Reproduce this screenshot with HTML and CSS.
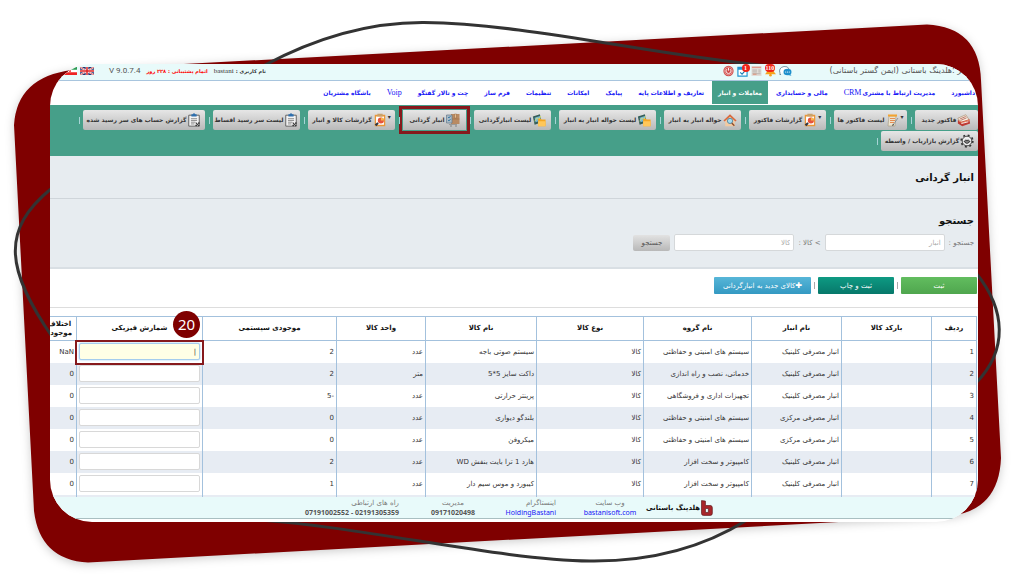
FILE: index.html
```html
<!DOCTYPE html>
<html lang="fa" dir="rtl">
<head>
<meta charset="utf-8">
<meta name="viewport" content="width=device-width, initial-scale=1">
<title>انبار گردانی</title>
<link rel="stylesheet" href="styles.css">
</head>
<body>
<svg class="defs" aria-hidden="true">
  <symbol id="i-clip" viewBox="0 0 14 16"><path d="M1 2.500h12v12.500H1z" fill="#f3f3f3" stroke="#555" stroke-width="1"/><path d="M4 1.500h1.500q1.500-2.500 3 0H10V4H4z" fill="#2d6fae"/><path d="M3.500 6.500h7M3.500 8.500h7M3.500 10.500h5M3.500 12.500h4" stroke="#666" stroke-width=".8"/><path d="m9 11 4 4" stroke="#333" stroke-width="1.200"/><circle cx="9.500" cy="14" r="1" fill="#333"/><circle cx="12.500" cy="11.500" r="1" fill="#333"/></symbol>
  <symbol id="i-report" viewBox="0 0 14 16"><path d="M1 2h12v13H1z" fill="#e9973a"/><path d="M2.500 4h9v9.500h-9z" fill="#fff"/><path d="M4 .8h6V4H4z" fill="#c9a16a"/><circle cx="8" cy="8.500" r="3.500" fill="#e5533c"/><path d="M8 8.500V5a3.500 3.500 0 0 1 3.500 3.500z" fill="#f7b64a"/><path d="m1 13 3-2.500L5.500 12 3 15z" fill="#2e3440"/></symbol>
  <symbol id="i-stock" viewBox="0 0 16 15"><path d="M1 3.500 9 1l2 9-8 3z" fill="#355f58"/><path d="m3 5 6-2 1 5-6 2z" fill="#79b7d6"/><path d="m3 9 3-4 2 2 2-4" stroke="#d8e26b" fill="none"/><path d="M7 6h3l1 1h4.500v7.500H7z" fill="#f5a623"/><path d="M7 9h8.500v5.500H7z" fill="#ffc75a"/></symbol>
  <symbol id="i-home" viewBox="0 0 16 15"><path d="M2.500 7v7.500h11V7L8 2z" fill="#f2c9a1"/><path d="M.5 8 8 1l7.500 7-1.300 1.200L8 3.500 1.800 9.200z" fill="#d9673b"/><circle cx="8" cy="8.500" r="3" fill="#a5dcef" stroke="#50829b"/><path d="m10 11 3 3" stroke="#8a4a2a" stroke-width="1.500"/></symbol>
  <symbol id="i-box" viewBox="0 0 14 14"><path d="M5 1h8.500v10H5z" fill="#b98a62"/><path d="M8.500 1h2v4h-2zM5 6h8.500" fill="#e2bd91" stroke="#956742" stroke-width=".5"/><path d="M.5 2H6v8H.5z" fill="#a8bac6" stroke="#64798a" stroke-width=".7"/><path d="m2 4 1 1 1.500-2M2 7l1 1 1.500-2" stroke="#286fa0" fill="none" stroke-width=".8"/><path d="M3 11h8v1H3z" fill="#999"/><circle cx="5" cy="13" r=".7" fill="#666"/><circle cx="10" cy="13" r=".7" fill="#666"/></symbol>
  <symbol id="i-new" viewBox="0 0 16 14"><path d="m1 5 9-4 4 6-9 5z" fill="#f6eee0" stroke="#987350" stroke-width=".6"/><path d="m3 6 7-3M4 7.500l7-3" stroke="#a54538" stroke-width=".8"/><path d="m1 7 4 2 9-3 1 5-9 3-5-3z" fill="#be3a34"/><path d="m2 8 4 2 8-3" stroke="#ef9b6c" fill="none"/><path d="m5 11 8-2" stroke="#fff"/></symbol>
  <symbol id="i-list" viewBox="0 0 12 14"><path d="M2 3h7l-1 10H1z" fill="#ece3ce" stroke="#a4977d" stroke-width=".6"/><path d="M1 1.500h9v2H1z" fill="#f3a32e"/><path d="M3 5.500h5M3 7.500h5M3 9.500h4" stroke="#e57733" stroke-width=".8"/><path d="m6 12 5-7" stroke="#7b8791" stroke-width=".8"/><path d="m5 13 1-2 1 1z" fill="#222"/></symbol>
  <symbol id="i-gear" viewBox="0 0 16 16"><circle cx="8" cy="8" r="6.600" fill="none" stroke="#333" stroke-width="2" stroke-dasharray="2.200 2.984"/><circle cx="8" cy="8" r="5.500" fill="#eee" stroke="#333"/><path d="M4 8.500 6.500 6.200l1.500.6 1.500-.6L12 8.500 9 11H7z" fill="#444"/><path d="m6 8 2 1.500L10 8" stroke="#eee" fill="none" stroke-width=".7"/></symbol>
  <symbol id="i-power" viewBox="0 0 12 12"><circle cx="6" cy="6" r="5.600" fill="#cf4c4b"/><circle cx="6" cy="6" r="4.300" fill="none" stroke="#f2b8b5" stroke-width=".7"/><path d="M4.200 4a2.700 2.700 0 1 0 3.600 0M6 2.600v3" stroke="#fff" fill="none"/></symbol>
  <symbol id="i-task" viewBox="0 0 12 12"><path d="M1 2h10v9.500H1z" fill="#fff" stroke="#2396d0" stroke-width="1.300"/><path d="M1 2h10v2.500H1z" fill="#2396d0"/><path d="m3.500 7.500 2 2 3.500-4" stroke="#177eb4" fill="none" stroke-width="1.200"/></symbol>
  <symbol id="i-news" viewBox="0 0 12 12"><path d="M.5.500h11v11H.5z" fill="#e2dcd7"/><path d="M1 2h10" stroke="#e29a8c" stroke-width="1.500"/><path d="M1.500 5h5M1.500 7h5M1.500 9h9M8 5h2.500M8 7h2.500" stroke="#aaa29c" stroke-width=".8"/><path d="M2 9.500h4" stroke="#dc8a6e"/></symbol>
  <symbol id="i-bell" viewBox="0 0 12 12"><path d="M0 9.500Q2.500 8 2.500 5q0-3.500 3.500-3.500T9.500 5q0 3 2.500 4.500z" fill="#f6a21c"/><circle cx="6" cy="10.500" r="1.400" fill="#f6a21c"/></symbol>
  <symbol id="i-chat" viewBox="0 0 13 10"><path d="M2 8 1 9V7Q0 5 1 3t4-2.500Q9 0 10 3" fill="#fff" stroke="#5e7d90" stroke-width=".8"/><ellipse cx="8.500" cy="6" rx="4" ry="3.200" fill="#2090cc"/><path d="m11 8 1.500 1.800L9 9z" fill="#2090cc"/><circle cx="6.700" cy="6" r=".6" fill="#fff"/><circle cx="8.500" cy="6" r=".6" fill="#fff"/><circle cx="10.300" cy="6" r=".6" fill="#fff"/></symbol>
</svg>

<div class="stage">
  <svg class="backdrop" viewBox="0 0 1024 576" preserveAspectRatio="none" aria-hidden="true">
    <path class="blob" d="M72 70 927 24.500Q979 27 981 80L1001 458Q999 510 950 516L88 562.500Q40 560 34 511L14 125Q17 77 72 70Z"/>
    <g class="swoosh">
      <path d="M263 66Q345 22 424 22.500C530 24 650 55 770 66"/>
      <path d="M260 520C370 528 500 560 590 561Q680 562 747 520"/>
      <path d="M52 188C0 230 6 270 53 338"/>
      <path d="M976 273C1006 310 1008 350 976 383"/>
    </g>
  </svg>

  <main class="panel">
    <header class="topbar">
      <span class="company">کاربر :هلدینگ باستانی (ایمن گستر باستانی)</span>
      <div class="tray">
        <button class="tray-btn" aria-label="گفتگو"><svg><use href="#i-chat"/></svg></button>
        <button class="tray-btn" aria-label="اعلان ها"><svg><use href="#i-bell"/></svg><b class="count">110</b></button>
        <button class="tray-btn" aria-label="اخبار"><svg><use href="#i-news"/></svg></button>
        <button class="tray-btn" aria-label="وظایف"><svg><use href="#i-task"/></svg><b class="count count-end">1</b></button>
        <button class="tray-btn" aria-label="خروج"><svg><use href="#i-power"/></svg></button>
      </div>
      <div class="account">
        <span class="user"><b>نام کاربری :</b> <span class="latin">bastani</span></span>
        <b class="expiry">اتمام پشتیبانی : ۲۲۸ روز</b>
        <span class="version" dir="ltr">V 9.0.7.4</span>
        <span class="flags">
          <svg class="flag" viewBox="0 0 14 8"><path d="M0 0h14v8H0z" fill="#26356e"/><path d="m0 0 14 8M14 0 0 8" stroke="#fff" stroke-width="1.600"/><path d="m0 0 14 8M14 0 0 8" stroke="#d22" stroke-width=".7"/><path d="M7 0v8M0 4h14" stroke="#fff" stroke-width="2.600"/><path d="M7 0v8M0 4h14" stroke="#d22" stroke-width="1.500"/></svg>
          <svg class="flag" viewBox="0 0 14 8"><path d="M0 0h14v8H0z" fill="#fff"/><path d="M0 0h14v2.700H0z" fill="#2b9b52"/><path d="M0 5.300h14V8H0z" fill="#e22"/><circle cx="7" cy="4" r="1" fill="#e22"/></svg>
        </span>
      </div>
    </header>

    <nav class="menu">
      <a href="#">داشبورد</a><a href="#">مدیریت ارتباط با مشتری <span class="latin">CRM</span></a><a href="#">مالی و حسابداری</a><a href="#" class="active">معاملات و انبار</a><a href="#">تعاریف و اطلاعات پایه</a><a href="#">پیامک</a><a href="#">امکانات</a><a href="#">تنظیمات</a><a href="#">فرم ساز</a><a href="#">چت و تالار گفتگو</a><a href="#"><span class="latin">Voip</span></a><a href="#">باشگاه مشتریان</a>
    </nav>

    <div class="toolbar">
      <span class="tool w-xs"><button><svg><use href="#i-new"/></svg>فاکتور جدید</button></span>
      <span class="tool w-s"><button><i>▾</i><svg><use href="#i-list"/></svg>لیست فاکتور ها</button></span>
      <span class="tool w-m"><button><i>▾</i><svg><use href="#i-report"/></svg>گزارشات فاکتور</button></span>
      <span class="tool w-m"><button><svg><use href="#i-home"/></svg>حواله انبار به انبار</button></span>
      <span class="tool w-xl"><button><svg><use href="#i-stock"/></svg>لیست حواله انبار به انبار</button></span>
      <span class="tool w-m"><button><svg><use href="#i-stock"/></svg>لیست انبارگردانی</button></span>
      <span class="tool w-xs current"><button><svg><use href="#i-box"/></svg>انبار گردانی</button></span>
      <span class="tool w-l"><button><i>▾</i><svg><use href="#i-report"/></svg>گزارشات کالا و انبار</button></span>
      <span class="tool w-l"><button><svg><use href="#i-clip"/></svg>لیست سر رسید اقساط</button></span>
      <span class="tool w-xxl"><button><svg><use href="#i-clip"/></svg>گزارش حساب های سر رسید شده</button></span>
      <span class="tool w-xl"><button><svg><use href="#i-gear"/></svg>گزارش بازاریاب / واسطه</button></span>
    </div>

    <section class="title"><h1>انبار گردانی</h1></section>

    <section class="search">
      <h2>جستجو</h2>
      <form class="search-form">
        <label for="store">جستجو :</label><input id="store" placeholder="انبار">
        <label for="item">&gt; کالا :</label><input id="item" placeholder="کالا">
        <button type="button">جستجو</button>
      </form>
    </section>

    <section class="actions">
      <button class="act green">ثبت</button><span class="bar"></span>
      <button class="act teal">ثبت و چاپ</button><span class="bar"></span>
      <button class="act blue"><b>✚</b>کالای جدید به انبارگردانی</button>
    </section>

    <section class="grid-wrap">
      <table>
        <colgroup><col class="c-row"><col class="c-code"><col class="c-store"><col class="c-group"><col class="c-type"><col class="c-name"><col class="c-unit"><col class="c-sys"><col class="c-count"><col class="c-diff"></colgroup>
        <thead><tr><th>ردیف</th><th>بارکد کالا</th><th>نام انبار</th><th>نام گروه</th><th>نوع کالا</th><th>نام کالا</th><th>واحد کالا</th><th>موجودی سیستمی</th><th class="count-head">شمارش فیزیکی<span class="step">20</span></th><th>اختلاف موجودی</th></tr></thead>
        <tbody>
          <tr><td>1</td><td></td><td>انبار مصرفی کلینیک</td><td>سیستم های امنیتی و حفاظتی</td><td>کالا</td><td>سیستم صوتی باجه</td><td>عدد</td><td>2</td><td class="marked"><input class="editing" aria-label="شمارش فیزیکی 1" value="|"></td><td>NaN</td></tr>
          <tr><td>2</td><td></td><td>انبار مصرفی کلینیک</td><td>خدماتی، نصب و راه اندازی</td><td>کالا</td><td>داکت سایز 5*5</td><td>متر</td><td>2</td><td><input aria-label="شمارش فیزیکی 2"></td><td>0</td></tr>
          <tr><td>3</td><td></td><td>انبار مصرفی کلینیک</td><td>تجهیزات اداری و فروشگاهی</td><td>کالا</td><td>پرینتر حرارتی</td><td>عدد</td><td>-5</td><td><input aria-label="شمارش فیزیکی 3"></td><td>0</td></tr>
          <tr><td>4</td><td></td><td>انبار مصرفی مرکزی</td><td>سیستم های امنیتی و حفاظتی</td><td>کالا</td><td>بلندگو دیواری</td><td>عدد</td><td>0</td><td><input aria-label="شمارش فیزیکی 4"></td><td>0</td></tr>
          <tr><td>5</td><td></td><td>انبار مصرفی مرکزی</td><td>سیستم های امنیتی و حفاظتی</td><td>کالا</td><td>میکروفن</td><td>عدد</td><td>0</td><td><input aria-label="شمارش فیزیکی 5"></td><td>0</td></tr>
          <tr><td>6</td><td></td><td>انبار مصرفی کلینیک</td><td>کامپیوتر و سخت افزار</td><td>کالا</td><td>هارد 1 ترا بایت بنفش WD</td><td>عدد</td><td>2</td><td><input aria-label="شمارش فیزیکی 6"></td><td>0</td></tr>
          <tr><td>7</td><td></td><td>انبار مصرفی کلینیک</td><td>کامپیوتر و سخت افزار</td><td>کالا</td><td>کیبورد و موس سیم دار</td><td>عدد</td><td>1</td><td><input aria-label="شمارش فیزیکی 7"></td><td>0</td></tr>
          <tr><td></td><td></td><td></td><td></td><td></td><td></td><td></td><td></td><td><input aria-label="شمارش فیزیکی 8"></td><td></td></tr>
        </tbody>
      </table>
    </section>

    <footer class="foot">
      <div class="brand"><svg viewBox="0 0 12 16"><path d="M.5.500 4.500 1v4.500h5.500q1.500.500 1.500 2v6q0 2-2 2H2.500q-2 0-2-2z" fill="#a8262a" stroke="#5e1a1c" stroke-width=".7"/><path d="M4.500 8.500h3v4h-3z" fill="#e8fafa" stroke="#5e1a1c" stroke-width=".7"/></svg><b>هلدینگ باستانی</b></div>
      <div class="info"><span>وب سایت</span><a href="#">bastanisoft.com</a></div>
      <div class="info start"><span>اینستاگرام</span><a href="#">HoldingBastani</a></div>
      <div class="info"><span>مدیریت</span><strong>09171020498</strong></div>
      <div class="info start"><span>راه های ارتباطی</span><strong dir="ltr">07191002552 - 02191305359</strong></div>
    </footer>
  </main>
</div>
</body>
</html>
```
FILE: styles.css
```css
* { box-sizing: border-box; }
body {
  margin: 0;
  background: #fff;
  color: #333;
  font: 7px/10px "DejaVu Sans", sans-serif;
}
button, input { font: inherit; color: inherit; margin: 0; }
button { cursor: pointer; }
a { color: #1414f5; text-decoration: none; }
.defs { position: absolute; width: 0; height: 0; }
.latin { font-family: "Liberation Serif", serif; font-size: 8px; }

.stage {
  position: relative;
  display: flex;
  height: 100vh;
  min-height: 400px;
  padding: 64px 46px 54px 50px;
}
.backdrop { position: absolute; inset: 0; width: 100%; height: 100%; }
.blob { fill: #7f0000; filter: drop-shadow(0 2px 5px rgba(0, 0, 0, .2)); }
.swoosh { fill: none; stroke: #333; stroke-width: 3; }

.panel {
  position: relative;
  flex: 1;
  min-width: 0;
  display: flex;
  flex-direction: column;
  overflow: hidden;
  border-radius: 42px;
  background: #fff;
  padding-bottom: 3px;
}

.topbar {
  display: flex;
  align-items: center;
  height: 17px;
  padding: 0 4px 2px 13px;
  background: #e8fafa;
  border-bottom: 1px solid #a8c5de;
}
.company { color: #555; font-size: 8px; }
.tray { display: flex; align-items: center; gap: 3px; margin-right: 38px; }
.tray-btn { position: relative; width: 11px; height: 12px; padding: 0; border: 0; background: none; }
.tray-btn:first-child { width: 13px; }
.tray-btn svg { display: block; width: 100%; height: 12px; }
.count {
  position: absolute; top: -1px; left: 0;
  min-width: 8px; padding: 0 1px;
  border-radius: 4px;
  background: #f02418; color: #fff;
  font: bold 6px/8px "Liberation Serif", serif;
}
.count-end { left: 5px; }
.account { display: flex; align-items: center; gap: 6px; margin-right: auto; }
.user b, .expiry { font-size: 5px; }
.user .latin { font-size: 7px; }
.expiry { color: #f00; }
.version { font: 8px/10px Roboto, sans-serif; color: #555; }
.flags { display: flex; gap: 3px; margin-right: 9px; }
.flag { width: 14px; height: 8px; }

.menu { display: flex; height: 24px; font-size: 6px; font-weight: bold; white-space: nowrap; }
.menu .latin { font-weight: normal; }
.menu a { display: flex; align-items: center; gap: 1px; padding: 0 8px; }
.menu a:first-child { padding-right: 3px; }
.menu .active { height: 23px; padding: 0 6px; background: #469f89; color: #fff; }

.toolbar {
  display: flex;
  flex-wrap: wrap;
  align-content: flex-start;
  column-gap: 4px;
  row-gap: 1px;
  min-height: 51px;
  padding: 5px 0 4px;
  background: #469f89;
}
.tool { display: flex; align-items: center; gap: 3px; }
.tool::after { content: ""; width: 1px; height: 7px; background: #a7d4d6; }
.tool button {
  display: flex;
  flex: 1;
  align-items: center;
  justify-content: center;
  gap: 1px;
  height: 20px;
  padding: 0;
  border: 0;
  border-radius: 2px;
  background: linear-gradient(#e6e6e6, #b9b9b9);
  color: #333;
  font-size: 6px;
  font-weight: bold;
  white-space: nowrap;
}
.tool svg { width: 14px; height: 14px; flex: none; }
.tool i { font: 6px/10px "DejaVu Sans", sans-serif; align-self: flex-start; margin-top: 2px; }
.w-xs { width: 67px; }
.w-s { width: 77px; }
.w-m { width: 81px; }
.w-l { width: 91px; }
.w-xl { width: 101px; }
.w-xxl { width: 126px; }
.current button { outline: 3px solid #86191c; outline-offset: 1px; border-radius: 0; }

.title { height: 43px; padding: 15px 4px 0; background: #e7ecf0; border-bottom: 1px solid #cfd5da; }
h1, h2 { margin: 0; color: #111; font-size: 10px; line-height: 14px; }
.search { height: 70px; padding: 15px 4px 0; background: #e7ecf0; border-bottom: 2px solid #d9dfe4; color: #777; }
.search-form { display: flex; align-items: center; gap: 4px; margin-top: 6px; }
.search-form input { width: 120px; height: 17px; padding: 0 3px; border: 1px solid #d5d8da; border-radius: 2px; background: #fff; }
::placeholder { color: #aaa; opacity: 1; }
.search-form button { width: 37px; height: 16px; padding: 0; border: 0; border-radius: 2px; background: linear-gradient(#e2e2e2, #b8b8b8); color: #555; }

.actions { display: flex; align-items: flex-start; gap: 3px; height: 39px; padding: 8px 1px 0; border-bottom: 1px solid #ddd; }
.act { height: 17px; width: 76px; padding: 0; border: 0; border-radius: 1px; color: #fff; }
.act b { font-size: 8px; }
.green { background: linear-gradient(#62bd5f, #4fa64e); }
.teal { background: linear-gradient(#0e9a83, #07786a); }
.blue { width: 97px; background: linear-gradient(#57b6d8, #3399c2); }
.bar { width: 1px; height: 7px; margin-top: 5px; background: #aaa; }

.grid-wrap { flex: 1; min-height: 0; overflow: hidden; padding: 8px 1px 0; }
table { width: 101%; table-layout: fixed; border-collapse: collapse; }
.c-row { width: 45px; } .c-code, .c-store { width: 90px; } .c-group { width: 108px; }
.c-type { width: 107px; } .c-name { width: 111px; } .c-unit { width: 89px; }
.c-sys { width: 134px; } .c-count { width: 126px; }
th, td { border: 1px solid #a3c1dd; border-top: 0; border-bottom: 0; }
thead tr { height: 24px; border: 1px solid #a3c1dd; }
th { padding: 0 4px; color: #111; font-size: 7px; line-height: 9px; }
tbody tr { height: 22px; }
tbody tr:nth-child(even) { background: #e7ecf3; }
td { height: 22px; padding: 0 2px; text-align: right; white-space: nowrap; }
td input { display: block; width: 100%; height: 17px; padding: 0 3px; border: 1px solid #d8d8d8; border-radius: 2px; background: #fff; }
td .editing { background: #ffffe6; border-color: #a5cdee; box-shadow: 0 0 2px #8bc1ee; }
.marked, .count-head { position: relative; }
.marked::after { content: ""; position: absolute; inset: -1px -2px -2px; border: 2px solid #86191c; }
.step {
  position: absolute; top: -6px; right: 2px; z-index: 1;
  width: 27px; height: 27px; border-radius: 50%;
  background: #7f0000; color: #fff;
  font: 15px/27px "Noto Sans", sans-serif;
}

.foot {
  display: flex;
  align-items: center;
  height: 22px;
  padding-right: 265px;
  background: #e8fafa;
  border-bottom: 1px solid #a9bfc1;
  white-space: nowrap;
}
.brand { display: flex; align-items: center; gap: 1px; width: 67px; color: #111; }
.brand svg { width: 12px; height: 16px; }
.info { display: flex; flex-direction: column; align-items: center; color: #777; margin-right: 11px; width: 50px; }
.info.start { align-items: flex-start; margin-right: 29px; }
.info + .info:not(.start) { margin-right: 28px; }
.info strong, .info a { font-family: "Noto Sans", sans-serif; }
.info strong { color: #555; }
.info span, .info a, .info strong { line-height: 9px; }
```
